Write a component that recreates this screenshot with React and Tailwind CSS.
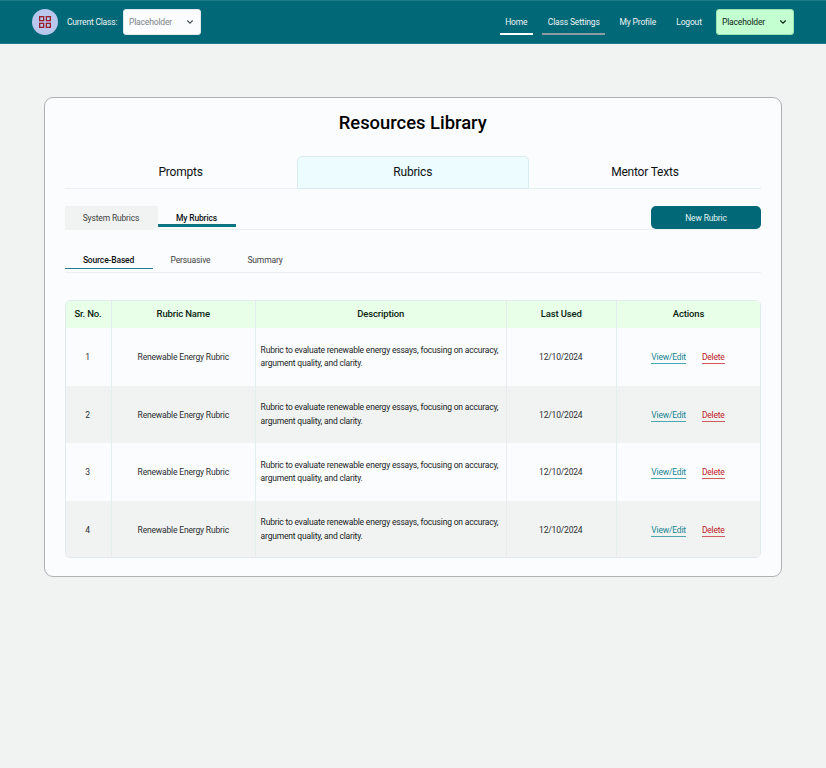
import React from "react";

const rows = [1, 2, 3, 4];
const cell = "flex items-center justify-center border-r border-[#e5edef]";
const grid = "grid grid-cols-[46px_144.5px_250.5px_110.5px_1fr]";

function Chevron({ className }) {
  return (
    <svg viewBox="0 0 8 6" className={className} fill="none" stroke="currentColor" strokeWidth="1.2">
      <path d="M1.3 1.5 4 4.2 6.7 1.5" />
    </svg>
  );
}

function Logo() {
  return (
    <div className="flex size-[26px] items-center justify-center rounded-full bg-[#b9c6ee]">
      <svg viewBox="0 0 12 12" className="size-3" fill="none" stroke="#96202c" strokeWidth="1.3">
        <rect x="0.65" y="0.65" width="4" height="4" />
        <rect x="7.35" y="0.65" width="4" height="4" />
        <rect x="0.65" y="7.35" width="4" height="4" />
        <rect x="7.35" y="7.35" width="4" height="4" />
      </svg>
    </div>
  );
}

function Header() {
  const link = "flex h-[26px] items-center justify-center border-b-2 pt-[2px]";
  return (
    <header className="flex h-11 items-center border-y border-[#1d7c88] bg-[#006876] pr-[32.5px] pl-8 text-[8.5px] tracking-[-0.16px] text-[#eef5f6]">
      <Logo />
      <span className="ml-[9px] w-[56px] tracking-[-0.2px] whitespace-nowrap">Current Class:</span>
      <div className="flex h-[26px] w-[77.5px] items-center justify-between rounded-[3px] border border-[#dfe9eb] bg-[#fbfcfe] pr-[6px] pl-[5px] text-[#7b8385]">
        Placeholder
        <Chevron className="h-[6px] w-2 text-[#4d5557]" />
      </div>
      <nav className="ml-auto flex items-center whitespace-nowrap">
        <a className={link + " w-[33.5px] border-white"}>Home</a>
        <a className={link + " ml-[8.5px] w-[63.5px] border-[#8d9ba0] pl-px"}>Class Settings</a>
        <a className={link + " ml-[9px] w-[47.5px] border-transparent"}>My Profile</a>
        <a className={link + " ml-[9px] w-[37px] border-transparent"}>Logout</a>
      </nav>
      <div className="ml-[8.5px] flex h-[26px] w-[77.5px] items-center justify-between rounded-[3px] border border-[#9be3b4] bg-[#c3ffd0] pr-[6px] pl-[5px] text-[#0b2413]">
        Placeholder
        <Chevron className="h-[6px] w-2" />
      </div>
    </header>
  );
}

function Tabs() {
  const tab = "flex h-[33px] items-center justify-center";
  return (
    <div className="grid grid-cols-3 text-[12px] tracking-[-0.2px] text-[#0d1112]">
      <div className={tab + " border-b border-[#ebeff1]"}>Prompts</div>
      <div className={tab + " rounded-t-[5px] border border-[#d9ebee] bg-[#edfcff] pb-px"}>Rubrics</div>
      <div className={tab + " border-b border-[#e4edef]"}>Mentor Texts</div>
    </div>
  );
}

function Table() {
  return (
    <div className="mt-[28px] h-[258px] overflow-hidden rounded-[5px] border border-[#e1ebed] text-[8.5px] tracking-[-0.19px] text-[#2b2e30]">
      <div className={grid + " h-[27px] bg-[#e8ffe8] text-[9.5px] font-medium tracking-[-0.14px] text-[#0b2413] *:pb-px"}>
        <div className={cell}>Sr. No.</div>
        <div className={cell}>Rubric Name</div>
        <div className={cell}>Description</div>
        <div className={cell}>Last Used</div>
        <div className="flex items-center justify-center">Actions</div>
      </div>
      {rows.map((n) => (
        <div key={n} className={grid + " h-[57.6px] even:bg-[#fbfcfe] odd:bg-[#f1f3f2] *:pt-px"}>
          <div className={cell + " pr-px"}>{n}</div>
          <div className={cell + " tracking-[-0.17px]"}>Renewable Energy Rubric</div>
          <div className="flex items-center border-r border-[#e5edef] pl-[4.6px] leading-[13.8px] whitespace-nowrap text-[#191c1d]">
            <p>
              Rubric to evaluate renewable energy essays, focusing on accuracy,
              <br />
              argument quality, and clarity.
            </p>
          </div>
          <div className={cell + " pr-px"}>12/10/2024</div>
          <div className="flex items-center justify-center gap-4 pr-px">
            <a className="h-[14px] border-b border-[#4ca7b1] leading-[14px] text-[#168591]">View/Edit</a>
            <a className="h-[14px] border-b border-[#cf5a62] leading-[14px] text-[#c0202a]">Delete</a>
          </div>
        </div>
      ))}
    </div>
  );
}

export default function App() {
  return (
    <div className="h-[768px] w-[826px] overflow-hidden bg-[#f1f3f2] font-['Roboto',sans-serif]">
      <Header />
      <main className="mt-[53px] ml-[44px] h-[480px] w-[738px] rounded-[9px] border border-[#adb1b4] bg-[#fbfcfe] pr-5 pl-[19.5px]">
        <h1 className="mt-[11px] h-[47px] text-center text-[18.4px] leading-[27px] font-medium text-black">Resources Library</h1>
        <Tabs />
        <div className="mt-[17px] flex h-6 items-start border-b border-[#ebeff1] text-[8.5px] tracking-[-0.16px]">
          <div className="flex h-6 w-[93px] shrink-0 items-center justify-center bg-[#f1f3f2] text-[#3d4143]">System Rubrics</div>
          <div className="flex h-[21px] w-[78px] items-center justify-center border-b-[3px] border-[#0d7482] pt-[6px] font-medium text-[#0d1112]">My Rubrics</div>
          <button className="ml-auto h-[23px] w-[110px] rounded-[5px] bg-[#006876] pt-px text-[#e4f5f7]">New Rubric</button>
        </div>
        <div className="mt-[21px] flex h-[22px] items-start border-b border-[#ebeff1] text-[8.5px] tracking-[-0.16px] text-[#3d4143]">
          <div className="flex h-[18px] w-[88px] items-center justify-center border-b border-[#267f8b] pt-px font-medium text-[#0d1112]">Source-Based</div>
          <div className="flex h-[18px] w-[76px] items-center justify-center">Persuasive</div>
          <div className="flex h-[18px] w-[73px] items-center justify-center">Summary</div>
        </div>
        <div className="-mt-px">
          <Table />
        </div>
      </main>
    </div>
  );
}
